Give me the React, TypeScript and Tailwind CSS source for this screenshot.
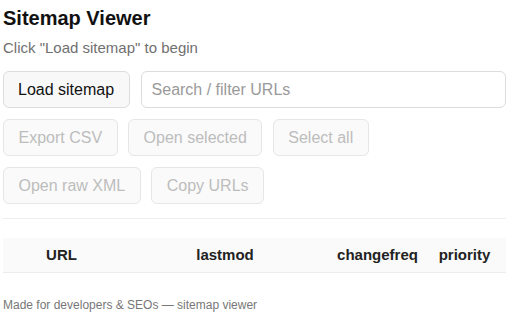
import * as React from 'react'

const disabledBtn =
  'h-[37px] px-[14.5px] rounded-md border border-[#e6e6e6] bg-[#fafafa] text-[16px] leading-[19px] text-[#bdbdbd] cursor-not-allowed'

export default function App() {
  const [query, setQuery] = React.useState('')

  return (
    <div className="w-[512px] h-[320px] bg-white overflow-hidden font-['Liberation_Sans',Arial,sans-serif]">
      <div className="ml-[3px] w-[503px] pt-[4px]">
        {/* Header */}
        <h1 className="text-[20px] leading-[28px] font-bold text-[#111]">Sitemap Viewer</h1>
        <p className="mt-[6px] text-[15px] leading-[20px] text-[#707070]">Click "Load sitemap" to begin</p>

        {/* Controls */}
        <div className="mt-[13px] flex flex-col gap-[11px]">
          <div className="flex gap-[10.5px]">
            <button className="h-[37px] pl-[14px] pr-[15px] rounded-md border border-[#dcdcdc] bg-[#f8f8f8] text-[16px] leading-[19px] text-[#111] shrink-0">
              Load sitemap
            </button>
            <input
              value={query}
              onChange={(e) => setQuery(e.target.value)}
              placeholder="Search / filter URLs"
              className="h-[37px] flex-1 px-[10px] rounded-md border border-[#dcdcdc] bg-white text-[16px] text-[#111] placeholder:text-[#9a9a9a] outline-none"
            />
          </div>
          <div className="flex gap-[10.5px]">
            <button disabled className={disabledBtn}>Export CSV</button>
            <button disabled className={disabledBtn}>Open selected</button>
            <button disabled className={disabledBtn}>Select all</button>
          </div>
          <div className="flex gap-[10.5px]">
            <button disabled className={disabledBtn}>Open raw XML</button>
            <button disabled className={disabledBtn}>Copy URLs</button>
          </div>
        </div>

        <div className="mt-[14px] border-t border-[#eeeeee]" />

        {/* Table */}
        <div className="mt-[19px] grid grid-cols-[117px_210px_95px_81px] h-[35px] items-center bg-[#fafafa] border-b border-[#ececec] text-[15px] font-bold text-[#222] text-center">
          <div>URL</div>
          <div>lastmod</div>
          <div>changefreq</div>
          <div className="pr-[2px]">priority</div>
        </div>

        <p className="mt-[24px] text-[12px] leading-[16px] text-[#777]">
          Made for developers &amp; SEOs — sitemap viewer
        </p>
      </div>
    </div>
  )
}
